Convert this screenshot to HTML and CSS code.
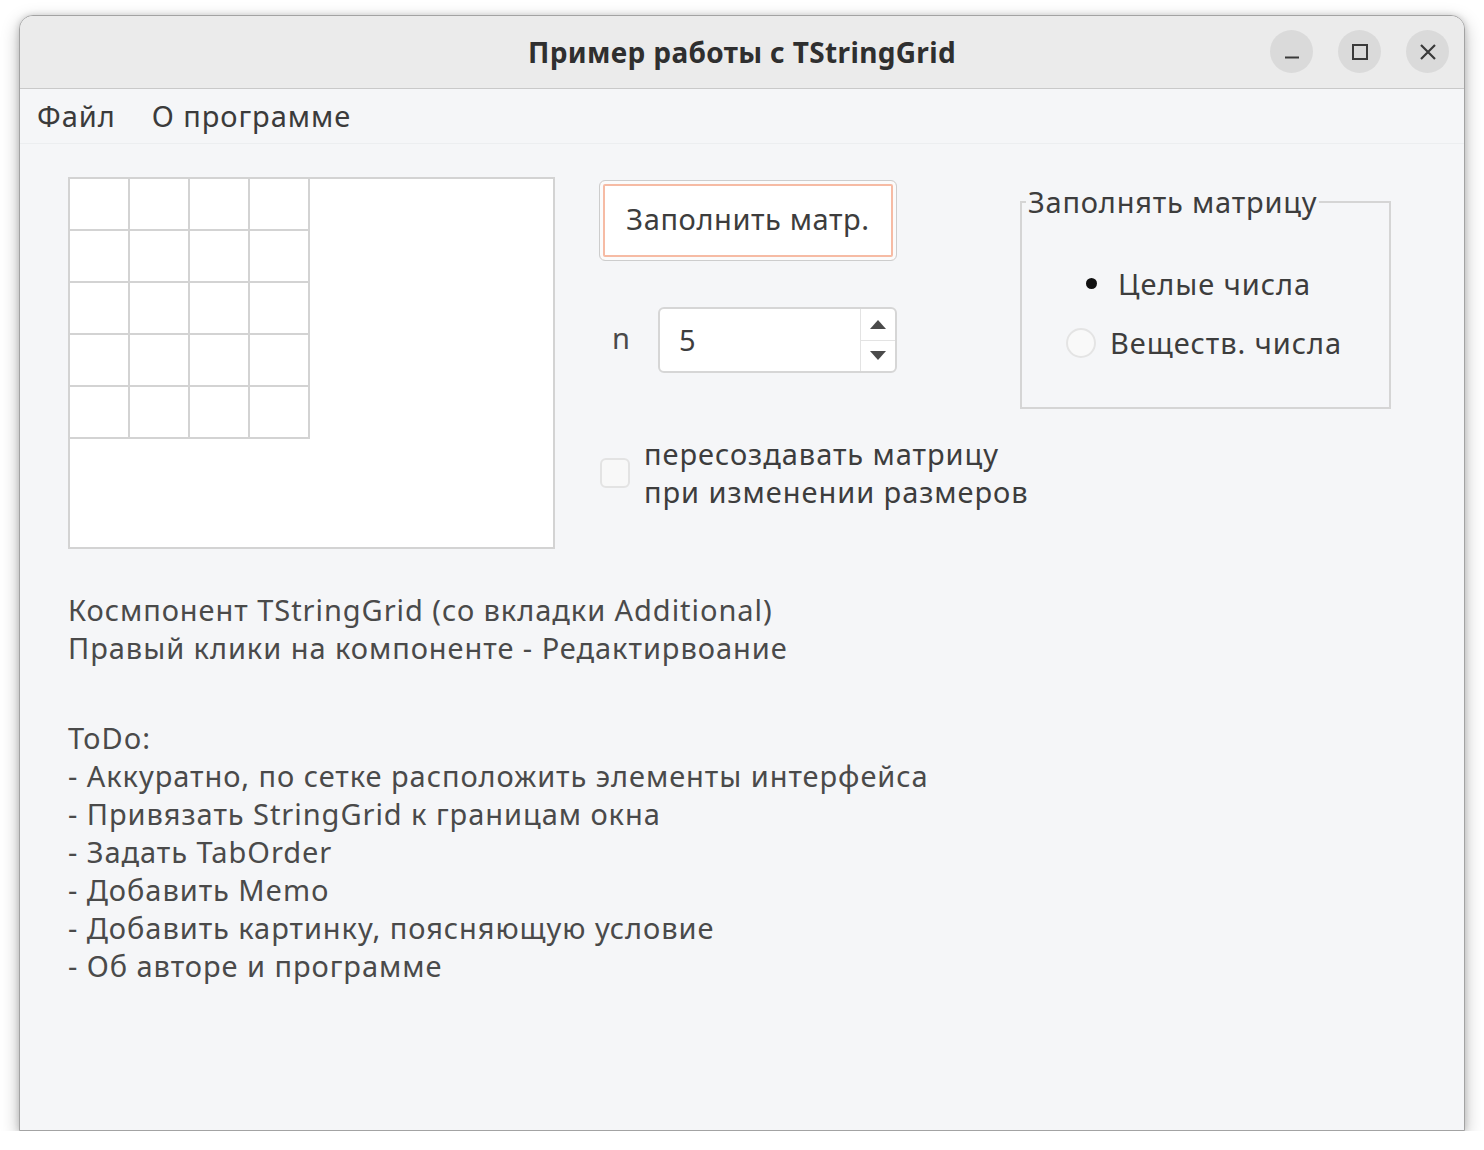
FILE: index.html
```html
<!DOCTYPE html>
<html lang="ru">
<head>
<meta charset="utf-8">
<title>Пример работы с TStringGrid</title>
<link rel="stylesheet" href="styles.css">
</head>
<body>
<div class="window">
  <div class="titlebar">
    <div class="title">Пример работы с TStringGrid</div>
    <div class="controls">
      <span class="ctl"><svg width="16" height="16" viewBox="0 0 16 16"><path d="M1 13.5h14" stroke="#3a3a3a" stroke-width="2"/></svg></span>
      <span class="ctl"><svg width="18" height="18" viewBox="0 0 18 18"><rect x="2" y="2" width="14" height="14" fill="none" stroke="#3a3a3a" stroke-width="2"/></svg></span>
      <span class="ctl"><svg width="18" height="18" viewBox="0 0 18 18"><path d="M2 2L16 16M16 2L2 16" stroke="#3a3a3a" stroke-width="2.2"/></svg></span>
    </div>
  </div>
  <div class="menubar">
    <span class="menu-item">Файл</span>
    <span class="menu-item">О программе</span>
  </div>
  <div class="content">
    <div class="top-row">
      <div class="stringgrid">
        <div class="cells">
          <div class="cell"></div><div class="cell"></div><div class="cell"></div><div class="cell"></div>
          <div class="cell"></div><div class="cell"></div><div class="cell"></div><div class="cell"></div>
          <div class="cell"></div><div class="cell"></div><div class="cell"></div><div class="cell"></div>
          <div class="cell"></div><div class="cell"></div><div class="cell"></div><div class="cell"></div>
          <div class="cell"></div><div class="cell"></div><div class="cell"></div><div class="cell"></div>
        </div>
      </div>
      <div class="mid-col">
        <div class="btn">Заполнить матр.</div>
        <div class="spin-row">
          <span class="n-label">n</span>
          <div class="spinbox">
            <span class="spin-value">5</span>
            <div class="spin-btns">
              <span class="spin-btn"><svg width="16" height="9" viewBox="0 0 16 9"><path d="M8 0L16 9H0Z" fill="#4a4a4a"/></svg></span>
              <span class="spin-btn"><svg width="16" height="9" viewBox="0 0 16 9"><path d="M0 0H16L8 9Z" fill="#4a4a4a"/></svg></span>
            </div>
          </div>
        </div>
        <div class="check-row">
          <span class="checkbox"></span>
          <span class="check-text">пересоздавать матрицу<br>при изменении размеров</span>
        </div>
      </div>
      <fieldset class="groupbox">
        <legend>Заполнять матрицу</legend>
        <div class="radio-row radio-checked"><span class="dot"></span><span>Целые числа</span></div>
        <div class="radio-row"><span class="circle"></span><span>Веществ. числа</span></div>
      </fieldset>
    </div>
    <div class="note">Космпонент TStringGrid (со вкладки Additional)<br>Правый клики на компоненте - Редактирвоание</div>
    <div class="note todo">ToDo:<br>- Аккуратно, по сетке расположить элементы интерфейса<br>- Привязать StringGrid к границам окна<br>- Задать TabOrder<br>- Добавить Memo<br>- Добавить картинку, поясняющую условие<br>- Об авторе и программе</div>
  </div>
</div>
</body>
</html>
```
FILE: styles.css
```css
* { box-sizing: border-box; }
html, body { margin: 0; padding: 0; }
body {
  background: #ffffff;
  padding: 15px 0 0 19px;
  font-family: "Noto Sans", "Open Sans", sans-serif;
  font-size: 29px;
  letter-spacing: 0.95px;
  color: #4a4a4a;
}
.window {
  width: 1446px;
  height: 1116px;
  border: 1px solid #a3a3a3;
  border-radius: 14px 14px 0 0;
  background: #f5f6f8;
  box-shadow: 0 6px 18px rgba(0,0,0,0.28), 0 0 6px rgba(0,0,0,0.15);
  overflow: hidden;
  display: flex;
  flex-direction: column;
}
.titlebar {
  height: 73px;
  flex: none;
  background: #ebebeb;
  border-bottom: 1px solid #c9c9c9;
  display: flex;
  align-items: center;
  justify-content: center;
  position: relative;
}
.title {
  font-weight: bold;
  font-size: 28px;
  letter-spacing: 0.35px;
  color: #2f2f2f;
}
.controls {
  position: absolute;
  right: 15px;
  top: 14px;
  display: flex;
  gap: 25px;
}
.ctl {
  width: 43px;
  height: 43px;
  border-radius: 50%;
  background: #dadada;
  display: flex;
  align-items: center;
  justify-content: center;
}
.menubar {
  height: 55px;
  flex: none;
  border-bottom: 1px solid #eceef0;
  display: flex;
  align-items: center;
  padding-left: 17px;
  gap: 36px;
  color: #3b3b3b;
}
.menu-item { margin-top: -2px; }
.content {
  padding: 33px 0 0 48px;
}
.top-row {
  display: flex;
  align-items: flex-start;
}
.stringgrid {
  width: 487px;
  height: 372px;
  background: #fff;
  border: 2px solid #d3d3d3;
  flex: none;
}
.cells {
  display: grid;
  grid-template-columns: repeat(4, 60px);
  grid-template-rows: repeat(5, 52px);
  width: max-content;
}
.cell {
  border-right: 2px solid #d3d3d3;
  border-bottom: 2px solid #d3d3d3;
}
.mid-col {
  width: 421px;
  flex: none;
  margin-left: 44px;
  padding-top: 3px;
}
.btn {
  width: 298px;
  height: 81px;
  border: 1px solid #cdcdcd;
  border-radius: 6px;
  background: #fff;
  box-shadow: inset 0 0 0 3px #fbfbfb, inset 0 0 0 5px #f6bba4;
  display: flex;
  align-items: center;
  justify-content: center;
  color: #3d3d3d;
  padding-bottom: 4px;
  letter-spacing: 0.6px;
}
.spin-row {
  display: flex;
  align-items: center;
  margin-top: 46px;
}
.n-label {
  width: 59px;
  padding-left: 13px;
  margin-top: -6px;
}
.spinbox {
  width: 239px;
  height: 66px;
  background: #fff;
  border: 2px solid #d6d6d6;
  border-radius: 6px;
  display: flex;
}
.spin-value {
  flex: 1;
  padding-left: 19px;
  padding-bottom: 2px;
  display: flex;
  align-items: center;
  color: #3d3d3d;
}
.spin-btns {
  width: 35px;
  border-left: 1px solid #e3e3e3;
  display: flex;
  flex-direction: column;
}
.spin-btn {
  flex: 1;
  display: flex;
  align-items: center;
  justify-content: center;
}
.spin-btn + .spin-btn { border-top: 1px solid #e3e3e3; }
.check-row {
  display: flex;
  align-items: center;
  margin-top: 62px;
  white-space: nowrap;
}
.checkbox {
  width: 30px;
  height: 30px;
  flex: none;
  margin-left: 1px;
  border: 2px solid #e3e3e3;
  border-radius: 6px;
  background: #f8f8f8;
}
.check-text {
  margin-left: 14px;
  line-height: 38px;
  color: #3d3d3d;
}
.groupbox {
  width: 371px;
  height: 226px;
  margin: 6px 0 0 0;
  padding: 0;
  border: 2px solid #d5d5d5;
  flex: none;
}
.groupbox legend {
  padding: 0 2px;
  margin-left: 4px;
  line-height: 38px;
  color: #3d3d3d;
  letter-spacing: 0.8px;
}
.radio-row {
  display: flex;
  align-items: center;
  height: 59px;
  color: #3d3d3d;
  white-space: nowrap;
}
.radio-checked { margin-top: 33px; }
.dot {
  width: 11px;
  height: 11px;
  border-radius: 50%;
  background: #111;
  margin: 0 21px 0 64px;
}
.circle {
  width: 30px;
  height: 30px;
  border-radius: 50%;
  border: 2px solid #e4e4e4;
  background: #f9f9f9;
  margin: 0 14px 0 44px;
}
.note {
  line-height: 38px;
  margin-top: 42px;
}
.todo { margin-top: 52px; }
```
